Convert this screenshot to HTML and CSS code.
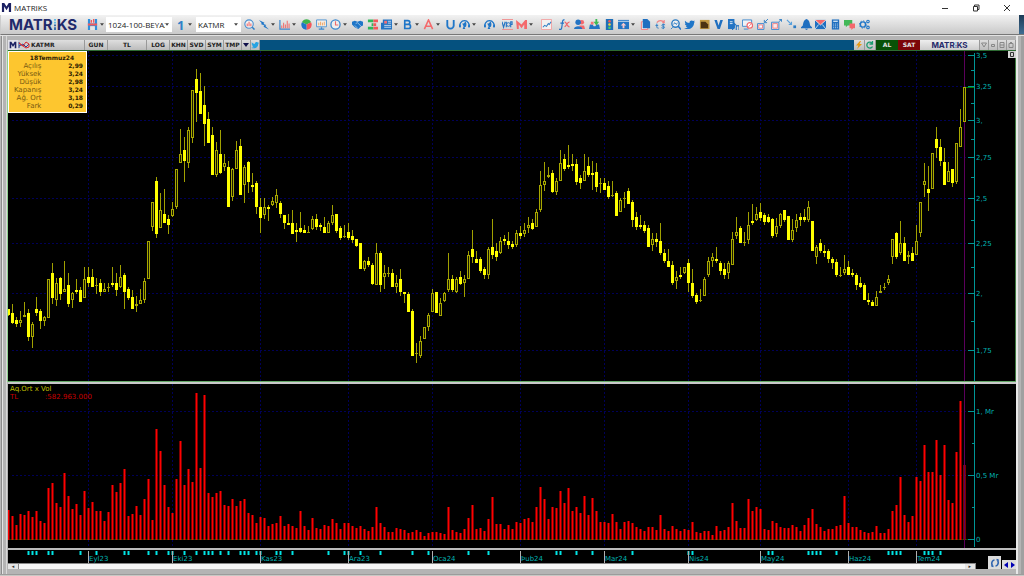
FILE: index.html
```html
<!DOCTYPE html>
<html lang="tr">
<head>
<meta charset="utf-8">
<title>MATRIKS</title>
<link rel="stylesheet" href="styles.css">
</head>
<body>
<svg class="sprite" aria-hidden="true">
  <symbol id="m-mark" viewBox="0 0 12 12"><path d="M1 11V1h2.600L6 5l2.400-4H11v10H8.600V5L6 9 3.400 5v6z" fill="#1b2163"/></symbol>
  <symbol id="save" viewBox="0 0 12 12"><path d="M1 0h2.500v5h5V0H11v12H8.500V8h-5v4H1z" fill="#2f8fdc"/><path d="M4 1h1.500v3H4zM6.500 0h1.500v4H6.500zM1 5h10v2H1z" fill="#f4585c"/><path d="M3.500 8h5v4h-5z" fill="#e6e6e6"/></symbol>
  <symbol id="magbars" viewBox="0 0 12 12"><circle cx="5.500" cy="5.500" r="4.600" fill="#f2f2f2" stroke="#4a8fd0" stroke-width="1.200"/><path d="M3.500 8V5M5.500 8V3M7.500 8V5" stroke="#f46a6a" stroke-width="1.200"/><path d="M9 9l2.500 2.500" stroke="#2d7cc6" stroke-width="1.600"/></symbol>
  <symbol id="flash" viewBox="0 0 12 12"><path d="M1 1l6 3-1 1.500 3 1-1 1 4 4-6-3 1-1.500-4-1.500 1.200-1z" fill="#1f76c8"/></symbol>
  <symbol id="bars" viewBox="0 0 12 12"><path d="M1 1v10h11" fill="none" stroke="#3b88cf" stroke-width="1.300"/><path d="M3 10V7M5 10V4M7 10V6M9 10V2M11 10V5" stroke="#ef7676" stroke-width="1.200"/></symbol>
  <symbol id="pie" viewBox="0 0 12 12"><path d="M6 6L1 3.500A5.500 5.500 0 0 1 11 3.500z" fill="#3fb34c"/><path d="M6 6l5-2.500A5.500 5.500 0 0 1 6 11.600z" fill="#f4575a"/><path d="M6 6v5.600A5.500 5.500 0 0 1 1 3.500z" fill="#1f76c8"/></symbol>
  <symbol id="screen" viewBox="0 0 12 12"><path d="M.600 1h10.800v7.500H.600z" fill="#f4f0ea" stroke="#4c93d2"/><path d="M3 7V4M5 7V3M7 7V4M9 7V3" stroke="#f0a05a"/><path d="M3 11h6M6 9v2" stroke="#3b88cf" stroke-width="1.400"/></symbol>
  <symbol id="clock" viewBox="0 0 12 12"><circle cx="6" cy="6" r="5" fill="#eee" stroke="#3b88cf" stroke-width="1.400"/><path d="M6 2.500V6.500H9" fill="none" stroke="#ef6a6a" stroke-width="1.200"/></symbol>
  <symbol id="hands" viewBox="0 0 12 12"><path d="M0 3l3-1 3 1 3-1 3 1v4l-2 1-3 3-2-1-2-1-3-3z" fill="#1f76c8"/><path d="M4 5l2-1 4 4M3 7l3 3" stroke="#cfe0f0" stroke-width=".700" fill="none"/></symbol>
  <symbol id="depth" viewBox="0 0 12 12"><path d="M1 .500h6v3H1zM5 4.500h2v3H5zM1 8.500h6v3H1z" fill="#2fb85a"/><path d="M7 .500h5v3H7zM7 4.500h3v3H7zM7 8.500h5v3H7z" fill="#f4575a"/></symbol>
  <symbol id="news" viewBox="0 0 12 12"><path d="M2 .500h10v11H0V4h2z" fill="#2374c4"/><path d="M3.500 2h3v3h-3z" fill="#f47074"/><path d="M7.500 2.500H11M7.500 4.500H11M3.500 7H11M3.500 9H11" stroke="#dbe8f4" stroke-width=".900"/></symbol>
  <symbol id="b" viewBox="0 0 12 12"><path d="M3 1.800h3.500a2 2 0 0 1 0 4H3zM3 5.800h4a2.200 2.200 0 0 1 0 4.600H3z" fill="none" stroke="#1f76c8" stroke-width="1.800"/></symbol>
  <symbol id="a" viewBox="0 0 12 12"><path d="M1.500 11L6 1l4.500 10M3 8h6" fill="none" stroke="#f46a6c" stroke-width="1.700"/></symbol>
  <symbol id="u" viewBox="0 0 12 12"><path d="M2.500 1v6a3.500 3.500 0 0 0 7 0V1" fill="none" stroke="#1f76c8" stroke-width="2"/></symbol>
  <symbol id="head" viewBox="0 0 12 12"><path d="M1.500 9A5 5 0 1 1 10.500 9" fill="none" stroke="#1f76c8" stroke-width="1.300"/><path d="M3.500 5c2 0 3-1 3-2.500 2 1 2 4 1 6L6 9l1 2H4l1-3zM0 6h2v3H0zM10 6h2v3h-2z" fill="#1f76c8"/></symbol>
  <symbol id="viop" viewBox="0 0 12 12"><path d="M0 .500h12M0 11.500h12" stroke="#f08a8a"/><path d="M0 3l1.700 6L3.500 3M4.700 3v6M9.500 9V3h1.500v3H9.500" fill="none" stroke="#2374c4" stroke-width="1.200"/><circle cx="7" cy="6" r="2" fill="none" stroke="#2374c4"/></symbol>
  <symbol id="mred" viewBox="0 0 12 12"><path d="M0 1l6 5 4-5h2v10H9V6L6 10 3 6v5H1z" fill="#f46a6c"/></symbol>
  <symbol id="line" viewBox="0 0 12 12"><path d="M.500.500h11v11H.500z" fill="#f4f0f0" stroke="#f2a0a0"/><path d="M2 9l2-2 2 1 2-3 1 1 2-3" fill="none" stroke="#2c7cc4" stroke-width="1.100"/></symbol>
  <symbol id="fx" viewBox="0 0 12 12"><path d="M6 1C3 0 4 5 3 9c0 2-1 3-3 2M1.500 4.500h4" fill="none" stroke="#2374c4" stroke-width="1.300"/><path d="M6 3.500c2.500-1 2 5 5.500 5M11.500 3.500C9 3 8 8 6 8.500" fill="none" stroke="#f0686c" stroke-width="1.300"/></symbol>
  <symbol id="people" viewBox="0 0 12 12"><circle cx="8.500" cy="3.500" r="2.500" fill="#f4686c"/><path d="M6 7h5l1 4H6z" fill="#f4686c"/><circle cx="4.500" cy="3.500" r="3" fill="#2374c4"/><path d="M0 11c0-4 9-4 9 0z" fill="#2374c4"/></symbol>
  <symbol id="inbox" viewBox="0 0 12 12"><path d="M1 6h3l1 2h2l1-2h3l1 5H0z" fill="#2374c4"/><path d="M2 3h3v3H2z" fill="#f4787a"/><path d="M7 0h2v3h2L8 7 5 3h2z" fill="#3fba55"/></symbol>
  <symbol id="traffic" viewBox="0 0 12 12"><path d="M2 0h8v12H2z" fill="#1f6fb8"/><circle cx="6" cy="2.500" r="1.400" fill="#f4585c"/><circle cx="6" cy="6" r="1.400" fill="#f5d23c"/><circle cx="6" cy="9.500" r="1.400" fill="#4ad060"/></symbol>
  <symbol id="winup" viewBox="0 0 12 12"><path d="M0 1h12v10H0z" fill="#2374c4"/><path d="M0 2.500h12" stroke="#d9e5f0"/><path d="M6 4l3 3H7v3H5V7H3z" fill="#fbc9c9"/></symbol>
  <symbol id="copy" viewBox="0 0 12 12"><path d="M1.500 3h7v8.500h-7z" fill="#f0f0f0" stroke="#f4787a"/><path d="M3 0h5l3 3v7H3z" fill="#1f6fc0"/></symbol>
  <symbol id="ts" viewBox="0 0 12 12"><path d="M2 4c2-3 6-3 8 0l-2 0M10 4V1" fill="none" stroke="#f08284" stroke-width="1.200"/><path d="M2 5v4q0 1 2 1M.500 7h3M11 6.500c-3-2-5 1-2 1.500s1 3-2 1.500M9 5v6" fill="none" stroke="#2c7cc4"/></symbol>
  <symbol id="search" viewBox="0 0 12 12"><circle cx="6" cy="5" r="4" fill="#f0f0f0" stroke="#2c7cc4" stroke-width="1.500"/><path d="M9 8l3 3.500" stroke="#2374c4" stroke-width="1.700"/><path d="M1 11l2-2M4 6l1-2 2 2 1-2" stroke="#2c7cc4" fill="none"/></symbol>
  <symbol id="bird" viewBox="0 0 12 12"><path d="M0 10c2 0 3 0 4-1-1 0-2-1-2-1.500h1C1.500 7 1 6 1 5l1 .300C.800 4 .800 2.800 1.200 1.800 2.500 3.500 4 4.200 6 4.300 5.700 1.500 8.600.800 10 2.200L11.600 1.700 10.900 3 12 2.900 11 4C11 9 6 13 0 10z"/></symbol>
  <symbol id="gold" viewBox="0 0 12 12"><path d="M1 1h10.500v10H1z" fill="#c29a42"/><path d="M2 3h5l3 3v4H2z" fill="#4d3410"/></symbol>
  <symbol id="v" viewBox="0 0 12 12"><path d="M1.500 1h2.800L6 7l2-6h2.800L7.500 11H5z" fill="#1f6fc0"/></symbol>
  <symbol id="docn" viewBox="0 0 12 12"><path d="M0 0h7v11H0z" fill="#2374c4"/><path d="M2 3h3M2 5h3" stroke="#e5eef6"/><path d="M5 12V7l2 2V5l2 2v5M9 12V8q3-2 3 1v3" fill="none" stroke="#2374c4" stroke-width="1.200"/></symbol>
  <symbol id="monstop" viewBox="0 0 12 12"><path d="M.500 1h10v7h-10zM2 11h5" fill="#eef2f6" stroke="#3b88cf"/><circle cx="8.500" cy="7" r="3" fill="#fff" stroke="#f4686c" stroke-width="1.300"/><path d="M7 8.500l3-3" stroke="#f4686c"/></symbol>
  <symbol id="boxin" viewBox="0 0 12 12"><path d="M.600 5h7v6.400h-7z" fill="#f6d8da" stroke="#3b88cf"/><path d="M2 6.500h4V10H2z" fill="#fff" stroke="#f08284"/><path d="M12 0L8.500 3.500M8 1v3h3" fill="none" stroke="#2c7cc4"/></symbol>
  <symbol id="boxout" viewBox="0 0 12 12"><path d="M.600 3.500h8v8h-8z" fill="#f6d8da" stroke="#3b88cf"/><path d="M2 5h5v5H2z" fill="#fbe9e9" stroke="#f08284"/><path d="M8.500 3L11.500.500M9 .500h2.500V3" fill="none" stroke="#2c7cc4"/></symbol>
  <symbol id="dots" viewBox="0 0 12 12"><path d="M1 1l5 5M6 3v3H3" fill="none" stroke="#58a0dc" stroke-width="1.200"/><path d="M8 7h3v3H8z" fill="#2c7cc4"/></symbol>
  <symbol id="bell" viewBox="0 0 12 12"><path d="M6 0c3 1 3.500 4 4 7l2 2v1H0V9l2-2c.500-3 1-6 4-7zM4 10.500h4L6 12z" fill="#1f6fc0"/></symbol>
  <symbol id="mail" viewBox="0 0 12 12"><path d="M0 1h12v10H0z" fill="#1f6fc0"/><path d="M0 1h12L6 6.500z" fill="#f4686c"/><path d="M0 1l6 5.500L12 1M0 11l4-5M12 11L8 6" fill="none" stroke="#fff" stroke-width=".800"/></symbol>
  <symbol id="calc" viewBox="0 0 12 12"><path d="M2 0.500h8v11H2z" fill="#1f6fc0"/><path d="M3.500 2.500h5" stroke="#c4dcf0" stroke-width="1.500"/><path d="M3.500 5.500h5M3.500 7.500h5M3.500 9.500h5" stroke="#c4dcf0" stroke-dasharray="1 1"/></symbol>
  <symbol id="chat" viewBox="0 0 12 12"><path d="M0 1h9v6H4L2 9V7H0z" fill="#42b857"/><path d="M6 5h6v5h-2l-2 2v-2H6z" fill="#f4686c"/></symbol>
  <symbol id="gears" viewBox="0 0 12 12"><circle cx="4.300" cy="6" r="2.800" fill="none" stroke="#1f76c8" stroke-width="1.500"/><circle cx="4.300" cy="6" r="3.900" fill="none" stroke="#1f76c8" stroke-dasharray="1.500 1.500"/><circle cx="9.800" cy="2.800" r="1.400" fill="none" stroke="#1f76c8" stroke-width="1.200"/><circle cx="9.800" cy="9.200" r="1.400" fill="none" stroke="#1f76c8" stroke-width="1.200"/></symbol>
  <symbol id="ldots" viewBox="0 0 4 12"><path d="M1 0h2v2H1zM1 3h2v2H1z" fill="#56b9e6"/><path d="M1 6h2v2H1zM1 9h2v3H1z" fill="#2d64a8"/></symbol>
  <symbol id="down" viewBox="0 0 6 4"><path d="M0 0h6L3 4z"/></symbol>
</svg>

<header class="titlebar">
  <svg class="ic mark"><use href="#m-mark"/></svg>
  <h1 class="title">MATRIKS</h1>
  <div class="winbtns">
    <button aria-label="Simge durumuna küçült"><svg viewBox="0 0 8 8"><path d="M1 4.500h6"/></svg></button>
    <button aria-label="Önceki boyut"><svg viewBox="0 0 8 8"><path d="M1.500 2.500h4V7h-4zM2.500 2V1H7v4.500H6"/></svg></button>
    <button aria-label="Kapat"><svg viewBox="0 0 8 8"><path d="M1 1l6 6M7 1L1 7"/></svg></button>
  </div>
</header>

<nav class="toolbar">
  <span class="logo">MATR<svg><use href="#ldots"/></svg>KS</span>
  <button class="tool drop" aria-label="Kaydet"><svg class="ic"><use href="#save"/></svg><svg class="arr"><use href="#down"/></svg></button>
  <span class="combo wide"><select aria-label="Sayfa"><option>1024-100-BEYAZ</option></select><svg class="arr"><use href="#down"/></svg></span>
  <button class="tool drop one"><span>1</span><svg class="arr"><use href="#down"/></svg></button>
  <span class="combo"><select aria-label="Sembol"><option>KATMR</option></select><svg class="arr"><use href="#down"/></svg></span>
  <div class="tools" id="tools"></div>
  <span class="grip"></span>
</nav>

<main class="frame">
  <div class="chartbar">
    <svg class="cell-ic"><use href="#m-mark"/></svg>
    <svg class="cell-chart" viewBox="0 0 12 8"><path d="M1 1v6M1 5l4-2 3 3 3-3" fill="none" stroke="#2a3f96"/><path d="M1 2l4 3 3-4 3 2v3l-3 1-3-2z" fill="none" stroke="#d8282c"/></svg>
    <button class="cell sym">KATMR</button>
    <button class="cell gun">GUN</button>
    <button class="cell tl">TL</button>
    <button class="cell log">LOG</button>
    <button class="cell">KHN</button>
    <button class="cell">SVD</button>
    <button class="cell">SYM</button>
    <button class="cell">TMP</button>
    <button class="cell mini" aria-label="Menü"><svg class="arr navy"><use href="#down"/></svg></button>
    <button class="cell mini" aria-label="Twitter"><svg class="ic8 sky"><use href="#bird"/></svg></button>
    <span class="fill"></span>
    <button class="cell sm" aria-label="Hızlı emir"><svg class="ic8" viewBox="0 0 8 8"><path d="M5 0L1 4.500h2.500L2 8l5-5H4.500L6 0z" fill="#e89a10"/></svg></button>
    <button class="cell sm" aria-label="Yenile"><svg class="ic8" viewBox="0 0 8 8"><path d="M6.500 5.500A3 3 0 1 1 6 2M6.500 0v3h-3" fill="none" stroke="#1c9c70" stroke-width="1.300"/></svg></button>
    <button class="order buy">AL</button>
    <button class="order sell">SAT</button>
    <span class="brand">MATR<svg><use href="#ldots"/></svg>KS</span>
    <button class="cell mini pale" aria-label="Aşağı"><svg class="ic8" viewBox="0 0 8 8"><path d="M1.500 2h5L4 6z"/></svg></button>
    <button class="cell mini pale" aria-label="Küçült"><svg class="ic8" viewBox="0 0 8 8"><path d="M2.500 3.500h3v2h-3z"/></svg></button>
    <button class="cell mini pale" aria-label="Büyüt"><svg class="ic8" viewBox="0 0 8 8"><path d="M2 1.500h4v5H2zM2 4h4"/></svg></button>
    <button class="cell mini pale" aria-label="Pencere"><svg class="ic8" viewBox="0 0 8 8"><path d="M2 2.500h4v4H2zM3 1.500h2"/></svg></button>
  </div>

  <section class="pane price">
    <svg class="plot" id="price" viewBox="8 51 1008 330" role="img" aria-label="KATMR günlük fiyat grafiği"></svg>
    <table class="quote">
      <thead><tr><th colspan="2">18Temmuz24</th></tr></thead>
      <tbody>
        <tr><td>Açılış</td><td>2,99</td></tr>
        <tr><td>Yüksek</td><td>3,24</td></tr>
        <tr><td>Düşük</td><td>2,98</td></tr>
        <tr><td>Kapanış</td><td>3,24</td></tr>
        <tr><td>Ağ. Ort</td><td>3,18</td></tr>
        <tr><td>Fark</td><td>0,29</td></tr>
      </tbody>
    </table>
    <button class="corner" aria-label="Paneli büyüt"><svg viewBox="0 0 8 7"><path d="M2.500 1.500h3v4h-3z"/></svg></button>
  </section>
  <section class="pane volume">
    <svg class="plot" id="volume" viewBox="8 384 1008 164" role="img" aria-label="Hacim grafiği"></svg>
    <div class="legend"><p>Aq.Ort x Vol</p><p class="val"><span>TL</span><span>:582.963.000</span></p></div>
  </section>
  <footer class="axis">
    <svg class="plot" id="months" viewBox="8 550 1008 13"></svg>
    <div class="scroll"><button aria-label="Sola kaydır">◂</button><span></span><button aria-label="Sağa kaydır">▸</button></div>
    <div class="pager">
      <button class="reload" aria-label="Yenile"><svg viewBox="0 0 12 12"><path d="M3 8C2 5 4 3 5.500 3M4.500 9.500L3 9V7M9 4c1 3-1 5-2.500 5M7.500 2.500L9 3v2" fill="none" stroke="#2c62b0" stroke-width="1.600"/></svg></button>
      <button aria-label="Geri"><svg viewBox="0 0 6 8"><path d="M5 1v6L1 4z"/></svg></button>
      <button aria-label="İleri"><svg viewBox="0 0 6 8"><path d="M1 1v6l4-3z"/></svg></button>
    </div>
  </footer>
</main>
<script src="chart.js"></script>
</body>
</html>
```
FILE: styles.css
```css
* { box-sizing: border-box; }
body { margin: 0; background: #c8c8c4; font-family: "DejaVu Sans", sans-serif; font-size: 7px; line-height: 8px; }
button, select { font: inherit; border: 0; padding: 0; margin: 0; background: none; color: inherit; }
button { display: flex; align-items: center; justify-content: center; }
svg { display: block; flex: none; }
.sprite { position: absolute; width: 0; height: 0; }
.ic { width: 11px; height: 11px; }
.ic8 { width: 8px; height: 8px; }
.arr { width: 4px; height: 3px; fill: #444; }
.navy { width: 6px; height: 4px; fill: #10104a; }
.sky { fill: #27a3e2; }

.titlebar { display: flex; align-items: center; height: 15px; background: #fff; padding: 0 13px 0 1px; }
.title { margin: 0 auto 0 2px; font: 400 8px/15px "Open Sans", sans-serif; color: #222; }
.winbtns { display: flex; gap: 23px; }
.winbtns svg { width: 8px; height: 8px; fill: none; stroke: #333; stroke-width: 1; }

.toolbar { display: flex; align-items: center; height: 20px; background: linear-gradient(#f2f2f2, #c9c9c9); border-bottom: 1px solid #777; padding-left: 8px; border-left: 1px solid #ccc; }
.logo { display: flex; align-items: center; width: 78px; font: 700 15px/18px Inter, sans-serif; color: #1f2a6b; }
.logo svg { width: 4px; height: 11px; }
.tool { display: flex; gap: 2px; width: 12px; }
.tool.drop { width: 18px; justify-content: flex-start; }
.combo { display: flex; align-items: center; background: #fff; height: 15px; width: 45px; padding: 0 3px 0 2px; }
.combo.wide { width: 66px; margin-left: 1px; }
.combo select { appearance: none; flex: 1; min-width: 0; height: 15px; font: 400 8px/15px "Open Sans", sans-serif; color: #222; overflow: hidden; text-overflow: clip; }
.one { margin: 0 3px; font: 700 13px/16px "Open Sans", sans-serif; color: #2f80c8; }
.one.tool { gap: 4px; padding-left: 2px; }
.tools { display: flex; gap: 3px; margin-left: 2px; }
.sep { margin-left: 3px; }
.tools .narrow { width: 11px; }
.tools .bird { fill: #1f76c8; }
.grip { align-self: stretch; width: 5px; margin-left: auto; background: linear-gradient(#1d3a55, #3f6d92); }

.frame { padding: 4px 8px 5px; border-top: 1px solid #e2e2e2; border-bottom: 1px solid #9c9c9c; background: linear-gradient(90deg, #b8b8b8 1px, #8c8c8c 1px 2px, #e4e4e4 2px 3px, #b4b4b4 3px 6px, #d8d8d8 6px 7px, #b4b4b4 7px calc(100% - 8px), #e8e8e8 calc(100% - 8px) calc(100% - 6px), #b4b4b4 calc(100% - 6px) calc(100% - 3px), #a0a0a0 calc(100% - 3px)); }
.chartbar { display: flex; height: 10px; background: #d0d0d0; overflow: hidden; }
.cell-ic { width: 10px; height: 10px; padding: 1px; background: #e2e2e8; }
.cell-chart { width: 12px; height: 10px; padding: 1px 0; }
.cell { width: 18px; height: 10px; background: linear-gradient(#dedede, #bcbcbc); border-right: 1px solid #999; font: 700 6px/10px "DejaVu Sans", sans-serif; color: #222; }
.cell.sym { width: 55px; justify-content: flex-start; padding-left: 1px; }
.gun, .cell.log { width: 23px; }
.cell.tl { width: 39px; }
.cell.mini { width: 9px; }
.cell.sm { width: 11px; }
.fill { flex: 1; background: #05517f; }
.pale path { fill: none; stroke: #888; }
.order { width: 22px; font: 700 6px/10px "DejaVu Sans", sans-serif; color: #e4e4e4; }
.buy { background: #075207; }
.sell { background: #7c0508; }
.brand { display: flex; align-items: center; justify-content: center; width: 60px; background: linear-gradient(#eee, #ccc); font: 700 8px/10px Inter, sans-serif; color: #262a6a; border-right: 1px solid #999; }
.brand svg { width: 2px; height: 6px; }

.pane { position: relative; background: #000; }
.price { border-top: 1px solid #2d6a32; border-bottom: 1px solid #63a866; box-shadow: -1px 0 #8fd08f, inset -1px 0 #3d7a3f; }
.volume { border-top: 2px solid #c9c9c9; border-bottom: 2px solid #bdbdbd; }
.plot { width: 100%; height: auto; font: 7px "DejaVu Sans", sans-serif; fill: #00b4b4; }
.grid { stroke: #000058; stroke-dasharray: 2 2; fill: none; }
.wick { stroke: #a0a000; fill: none; }
.hollow { stroke: #a8a800; fill: #181800; }
.solid { fill: #ff0; }
.scale { stroke: #009696; fill: none; stroke-width: 1; }
.cursor { stroke: #5c005c; fill: none; }
.zero { stroke: #004c00; fill: none; }
.last { stroke: #008000; fill: none; }
.vol { fill: #f00; }
.event { fill: #00e5e5; }
.month { stroke: #b0b0b0; fill: none; }

.quote { position: absolute; left: 0; top: 0; width: 79px; border: 1px solid #fff; background: #fdc62f; border-collapse: separate; border-spacing: 0; padding: 2px 3px 2px 1px; font-size: 7px; line-height: 8px; color: #7a5c12; }
.quote th { padding: 0 0 0 11px; font-size: 6px; color: #2d2000; }
.quote td { padding: 0; text-align: right; width: 41px; }
.quote td:first-child { width: 31px; }
.quote td:last-child { font-size: 6px; font-weight: 700; color: #2d2000; }
.corner { position: absolute; right: 0; top: 0; width: 8px; height: 7px; background: #d4d4d4; }
.corner svg { width: 8px; height: 7px; fill: none; stroke: #333; }
.legend { position: absolute; left: 2px; top: 1px; color: #c0c000; }
.legend p { margin: 0; }
.legend .val { display: flex; color: #c80000; }
.val span:first-child { width: 35px; }

.axis { position: relative; background: #000; }
.scroll { display: flex; width: 96%; height: 6px; background: #f6f6f6; border-top: 1px solid #888; }
.scroll span { flex: 1; }
.scroll button { width: 11px; background: #e4e4e4; border-right: 1px solid #888; font-size: 5px; line-height: 5px; color: #333; }
.pager { position: absolute; right: 0; bottom: 0; display: flex; align-items: flex-end; }
.pager button { width: 7px; height: 9px; background: #dcdcdc; }
.pager svg { width: 6px; height: 8px; fill: #0000b4; }
.pager .reload { width: 13px; height: 13px; margin-right: 1px; }
.pager .reload svg { width: 12px; height: 12px; }
```
FILE: chart.js
```js
// Each candle: high, body top, body bottom, low, 1 = filled / 0 = hollow.
const candles = `309 309 315 316 1,304 313 323 324 1,317 320 324 327 1,311 320 323 327 0,302 315 317 317 0,309 313 337 341 1,322 324 337 348 0,297 309 313 316 1,309 311 321 329 1,316 317 321 326 0,279 279 318 318 0,263 273 298 304 1,278 283 300 306 0,277 278 294 300 1,261 289 292 292 0,273 285 304 307 1,292 293 300 308 0,279 290 292 294 1,287 290 302 302 1,267 279 298 298 0,267 277 283 287 1,269 277 287 287 1,278 285 285 294 0,279 283 292 296 1,283 289 292 292 0,283 287 287 292 0,267 283 285 287 1,273 283 290 296 1,265 277 287 288 0,273 275 292 309 1,287 289 298 300 1,290 297 309 309 1,296 304 306 312 0,289 300 304 304 0,278 281 300 303 0,241 241 279 279 0,202 202 227 231 0,177 181 234 238 1,193 210 228 228 0,189 214 223 223 1,215 219 225 234 1,202 209 216 217 0,169 169 207 209 0,129 154 163 163 0,137 150 161 182 1,127 130 163 168 0,90 90 138 143 0,69 79 93 122 1,73 91 114 114 1,86 105 124 146 1,112 119 143 143 1,127 135 175 175 1,142 150 175 177 0,130 154 173 174 1,154 163 167 171 0,161 167 207 207 1,168 169 197 201 0,141 150 169 169 0,139 146 195 195 1,165 167 185 203 0,161 162 182 193 1,173 185 187 192 1,181 183 207 214 1,198 207 218 233 1,198 207 215 219 0,205 207 209 221 1,197 201 205 206 0,189 195 203 208 0,201 203 214 218 1,215 215 223 229 1,214 223 225 225 1,210 223 234 234 1,223 230 232 242 1,212 228 232 233 1,225 230 233 233 1,226 232 232 233 0,216 219 229 230 0,214 219 227 230 1,223 225 227 231 1,217 227 233 233 1,221 223 233 233 0,205 215 223 225 0,214 214 231 233 1,226 228 238 240 1,225 236 236 238 0,223 232 238 240 1,230 236 240 243 1,239 239 246 247 1,243 243 269 269 1,260 261 269 271 0,257 261 265 267 1,263 265 284 285 1,243 253 285 285 0,251 253 285 292 1,265 273 277 289 0,267 273 273 277 0,269 273 287 287 1,275 283 287 293 0,269 279 292 296 1,292 292 294 303 1,292 294 312 312 1,309 311 356 356 1,343 353 353 363 0,336 341 356 358 0,327 327 339 339 0,313 315 327 331 0,289 293 312 312 0,292 292 313 313 1,298 303 316 316 0,292 293 301 302 0,253 279 290 292 0,275 279 290 292 1,277 279 292 293 0,271 277 284 285 1,275 279 283 297 0,251 255 279 279 0,230 249 257 263 1,251 259 263 263 1,257 259 271 273 1,267 269 275 279 1,247 249 275 279 0,219 247 255 259 1,243 251 257 261 1,237 241 253 254 0,235 239 241 245 1,232 241 245 249 1,241 244 247 249 1,230 233 245 247 0,226 233 236 239 1,223 230 234 237 0,217 225 228 233 0,219 223 229 230 1,209 212 227 227 0,171 185 210 212 0,162 181 185 191 0,167 175 177 178 0,170 173 192 193 1,178 181 192 195 0,150 163 181 181 0,154 159 169 171 1,145 165 167 169 1,154 164 166 171 1,159 164 182 185 1,175 178 183 189 1,154 171 181 181 0,157 166 175 177 1,161 173 175 190 1,163 172 187 192 1,178 183 183 193 0,178 183 190 190 1,181 186 197 199 1,181 195 195 197 0,191 193 216 216 1,198 200 212 212 0,192 198 198 208 0,188 191 204 204 1,200 202 220 227 1,212 217 227 230 1,215 225 227 229 1,221 225 231 233 1,225 228 247 247 1,233 239 245 251 0,233 239 242 247 1,223 241 253 255 1,249 253 261 263 1,249 261 267 267 1,261 265 283 285 1,271 277 281 289 0,267 275 277 279 1,267 267 273 274 0,259 263 283 292 1,269 283 296 298 1,293 295 302 304 1,289 300 300 302 0,277 279 296 296 0,257 261 275 277 0,253 257 261 267 0,247 259 261 263 1,261 263 271 275 1,263 269 275 279 1,261 263 273 279 0,232 239 265 265 0,217 232 236 239 0,226 228 243 243 1,232 242 242 246 0,212 225 240 244 0,204 221 223 225 1,207 214 220 221 0,203 212 218 221 1,213 215 222 225 1,214 217 222 223 1,218 219 236 238 1,218 226 234 237 0,213 214 226 228 0,210 210 220 222 1,216 216 240 240 1,219 230 240 242 0,214 220 228 232 0,213 217 220 226 1,209 217 220 222 1,201 207 220 222 0,221 221 251 251 1,245 247 257 264 0,239 243 251 253 1,245 251 253 257 1,249 251 259 263 1,257 259 263 269 1,259 262 275 277 1,267 275 275 277 0,255 269 273 275 0,261 267 275 275 1,269 273 275 277 1,273 275 285 290 1,277 283 287 288 1,283 285 300 300 1,293 300 302 305 1,300 302 306 306 1,291 297 306 306 0,285 291 293 293 0,283 287 287 290 0,275 279 283 285 0,239 239 257 264 0,232 233 257 259 1,221 243 253 255 0,237 243 261 261 1,251 255 257 264 0,247 253 261 261 1,225 241 255 255 0,202 202 233 237 0,163 181 185 197 0,166 189 193 211 1,153 153 189 189 0,127 139 148 158 1,139 147 161 166 1,148 162 185 185 1,162 171 182 182 0,169 169 183 187 1,143 143 182 184 0,109 127 147 147 0,87 87 122 122 0`
  .split(',').map(row => row.split(' ').map(Number));

// Top of each volume bar, in thirds of a unit counted down to the zero line at 494.
const volumes = [404,422,450,416,420,406,424,408,436,444,338,324,384,396,294,362,400,386,418,348,398,380,406,408,436,410,328,350,322,282,422,416,392,418,372,312,434,160,226,328,394,412,312,196,330,280,320,52,278,58,354,366,352,346,390,392,372,392,376,372,412,418,442,424,428,452,446,442,422,452,446,452,458,408,452,464,428,458,462,448,452,430,442,460,444,442,
452,458,452,460,468,456,396,442,456,470,470,458,460,464,474,470,464,470,482,472,470,470,474,476,394,464,470,472,460,428,390,462,458,468,432,364,446,446,462,450,460,440,444,430,428,440,396,336,372,432,396,398,348,382,338,408,396,414,362,418,368,408,440,440,442,416,440,462,440,436,444,456,460,468,456,454,464,420,462,466,452,462,
468,460,464,440,470,474,468,466,480,452,466,464,456,384,438,458,458,370,408,394,402,460,464,436,442,455,458,458,450,456,468,448,428,400,446,456,468,462,460,452,450,362,442,455,456,464,470,472,470,452,472,472,460,406,388,306,420,440,422,306,318,210,290,290,194,300,210,374,384,230,78,268];

const events = [5,6,7,10,11,18,22,29,30,35,37,40,41,44,47,49,50,51,53,55,58,59,60,62,63,67,68,71,80,84,85,88,93,101,105,115,120,137,138,142,146,156,170,171,190,191,200,201,202,203,207,220,221,222,223,229,230,231,233];
const months = [[88,'Eyl23'],[172,'Eki23'],[260,'Kas23'],[348,'Ara23'],[432,'Oca24'],[520,'Þub24'],[604,'Mar24'],[688,'Nis24'],[760,'May24'],[848,'Haz24'],[916,'Tem24']];
const prices = [[55,'3,5'],[86,'3,25'],[120,'3,'],[157,'2,75'],[198,'2,5'],[243,'2,25'],[293,'2,'],[350,'1,75']];
const amounts = [[411,'1, Mr'],[475,'0,5 Mr'],[539,'0']];

const path = (cls, d) => `<path class="${cls}" d="${d}"/>`;
const text = (x, y, s) => `<text x="${x}" y="${y}">${s}</text>`;
const centre = i => 8.5 + 4 * i;

const vertical = (top, bottom) => months.map(([x]) => path('grid', `M${x + .5} ${top}V${bottom}`)).join('');
const across = rows => rows.map(([y]) => path('grid', `M12 ${y + .5}H974`)).join('');
const labels = rows => rows.map(([y, s]) => path('scale', `M968 ${y + .5}h6`) + text(976, y + 3, s)).join('');

const drawCandle = ([high, top, bottom, low, filled], i) => {
  const x = centre(i);
  if (top === bottom) return path('wick', `M${x} ${high}V${low}M${x - 1.5} ${top + .5}h3`);
  const body = filled
    ? `<rect class="solid" x="${x - 1.5}" y="${top}" width="3" height="${bottom - top}"/>`
    : `<rect class="hollow" x="${x - 1}" y="${top + .5}" width="2" height="${bottom - top - 1}"/>`;
  return path('wick', `M${x} ${high}V${low}`) + body;
};

document.getElementById('price').innerHTML =
  vertical(51, 381) + across(prices) + path('cursor', 'M964.5 51V381') +
  candles.map(drawCandle).join('') + path('last', 'M966 87.5h8') +
  path('scale', 'M974.5 53V381M971 70.500h3M971 103.500h3M971 139.500h3M971 177.500h3M971 220.500h3M971 267.500h3M971 321.500h3') +
  labels(prices);

document.getElementById('volume').innerHTML =
  vertical(384, 548) + across(amounts.slice(0, 2)) + path('zero', 'M8 539.5H974') +
  volumes.map((v, i) => {
    const height = Math.round((494 - v) / 3);
    return `<rect class="vol" x="${centre(i) - 1}" y="${540 - height}" width="2" height="${height}"/>`;
  }).join('') +
  path('cursor', 'M964.5 384V548') + path('scale', 'M974.5 385V547M972 443.500h2M972 507.500h2') + labels(amounts);

document.getElementById('months').innerHTML =
  events.map(i => `<rect class="event" x="${centre(i) - 1}" y="551" width="2" height="4"/>`).join('') +
  months.map(([x, s]) => path('month', `M${x + .5} 551v12`) + text(x + 1, 561, s)).join('');

// Toolbar: icon, label, and flags (d = has a menu arrow, s = extra space before, n = narrow).
const tools = [['magbars','Analiz'],['flash','Hızlı','d'],['bars','Grafik','d'],['pie','Pasta'],['screen','Ekran'],['clock','Saat','d'],['hands','Takas'],['depth','Derinlik'],['news','Haber','d'],['b','B','d'],['a','A','d'],['u','U'],['head','Destek','d'],['head','Yardım','s'],['viop','VIOP','s'],['mred','Matriks','d'],['line','Çizgi','s'],['fx','Fonksiyon','s'],['people','Kişiler'],['inbox','Gelen'],['traffic','Durum'],['winup','Pencere','d'],['copy','Kopyala'],['ts','Çevir'],['search','Ara'],['bird','Twitter','n'],['gold','Altın'],['v','V','n'],['docn','Belge'],['monstop','Durdur','n'],['boxin','İçeri'],['boxout','Dışarı','n'],['dots','Taşı'],['bell','Alarm'],['mail','Posta','n'],['calc','Hesap'],['chat','Sohbet','n'],['gears','Ayarlar']];
const flagClass = { d: 'drop', s: 'sep', n: 'narrow' };
document.getElementById('tools').innerHTML = tools.map(([id, label, flag]) =>
  `<button class="tool ${flagClass[flag] || ''}" aria-label="${label}"><svg class="ic ${id}"><use href="#${id}"/></svg>` +
  (flag === 'd' ? '<svg class="arr"><use href="#down"/></svg>' : '') + '</button>').join('');
```
